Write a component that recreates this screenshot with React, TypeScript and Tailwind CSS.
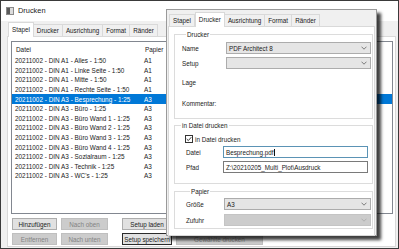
import React from 'react'

const rows: [string, string][] = [
  ['20211002 - DIN A1 - Alles - 1:50', 'A1'],
  ['20211002 - DIN A1 - Linke Seite - 1:50', 'A1'],
  ['20211002 - DIN A1 - Mitte - 1:50', 'A1'],
  ['20211002 - DIN A1 - Rechte Seite - 1:50', 'A1'],
  ['20211002 - DIN A3 - Besprechung - 1:25', 'A3'],
  ['20211002 - DIN A3 - Büro - 1:25', 'A3'],
  ['20211002 - DIN A3 - Büro Wand 1 - 1:25', 'A3'],
  ['20211002 - DIN A3 - Büro Wand 2 - 1:25', 'A3'],
  ['20211002 - DIN A3 - Büro Wand 3 - 1:25', 'A3'],
  ['20211002 - DIN A3 - Büro Wand 4 - 1:25', 'A3'],
  ['20211002 - DIN A3 - Sozialraum - 1:25', 'A3'],
  ['20211002 - DIN A3 - Technik - 1:25', 'A3'],
  ["20211002 - DIN A3 - WC's - 1:25", 'A3'],
]

const tabs = ['Stapel', 'Drucker', 'Ausrichtung', 'Format', 'Ränder']

function Tabs({ active }: { active: string }) {
  return (
    <div className="flex items-end h-[15px]">
      {tabs.map((t) =>
        t === active ? (
          <div
            key={t}
            className="h-[15px] px-[3px] flex items-center bg-white border border-b-0 border-[#d9d9d9] relative z-10 -mb-px pb-px"
          >
            {t}
          </div>
        ) : (
          <div
            key={t}
            className="h-[12px] px-[3px] flex items-center bg-[#f0f0f0] border border-b-0 border-l-0 border-[#d9d9d9] first:border-l"
          >
            {t}
          </div>
        )
      )}
    </div>
  )
}

function Chevron({ light }: { light?: boolean }) {
  return (
    <svg width="6" height="4" viewBox="0 0 6 4">
      <path d="M0.5 0.7 L3 3.2 L5.5 0.7" fill="none" stroke={light ? '#a8a8a8' : '#606060'} strokeWidth="0.8" />
    </svg>
  )
}

function Combo({ value, disabled }: { value?: string; disabled?: boolean }) {
  return (
    <div
      className={`h-[12px] flex-1 flex items-center justify-between border pl-[2px] pr-[3px] ${
        disabled ? 'bg-[#cccccc] border-[#c4c4c4]' : 'bg-[#e5e5e5] border-[#acacac]'
      }`}
    >
      <span>{value}</span>
      <Chevron light={disabled} />
    </div>
  )
}

function Btn({ label, w, disabled, focus }: { label: string; w: string; disabled?: boolean; focus?: boolean }) {
  return (
    <div
      className={`h-[12px] ${w} flex items-center justify-center border ${
        disabled
          ? 'bg-[#cccccc] border-[#bfbfbf] text-[#838383]'
          : focus
            ? 'bg-[#e1e1e1] border-[#2b2b2b]'
            : 'bg-[#e1e1e1] border-[#adadad]'
      }`}
    >
      {label}
    </div>
  )
}

export default function App() {
  return (
    <div className="w-[399px] h-[249px] overflow-hidden relative bg-[#f0f0f0] border border-[#3a3a3a] text-[#1a1a1a] text-[6.3px] leading-[7px] font-['Liberation_Sans',Arial,sans-serif]">
      {/* Title bar */}
      <div className="h-[20px] bg-white flex items-center pl-[5px] gap-[4px]">
        <svg width="8" height="8" viewBox="0 0 8 8">
          <rect x="0.5" y="0.5" width="7" height="7" fill="#dcdcdc" stroke="#8a8a8a" />
          <rect x="1" y="1" width="3" height="6" fill="#5a5a5a" />
        </svg>
        <span className="text-[7.4px] leading-[8px]">Drucken</span>
      </div>

      {/* Main tabs */}
      <div className="ml-[7px]">
        <Tabs active="Stapel" />
      </div>

      {/* Tab page */}
      <div className="ml-[6px] w-[389px] h-[211px] bg-white border border-[#d9d9d9]">
        <div className="ml-[3px] mt-[4px] w-[382px] h-[173px] border border-[#828790] bg-white text-[6.4px]">
          <div className="h-[14px] flex items-center pl-[4px]">
            <div className="w-[129px]">Datei</div>
            <div>Papier</div>
          </div>
          {rows.map(([name, size], i) => (
            <div
              key={i}
              className={`h-[9.6px] flex items-center pl-[3px] ${i === 4 ? 'bg-[#0078d7] text-white' : ''}`}
            >
              <div className="w-[129px] whitespace-nowrap">{name}</div>
              <div>{size}</div>
            </div>
          ))}
        </div>

        <div className="ml-[4px] mt-[4px] flex">
          <Btn label="Hinzufügen" w="w-[45px]" />
          <div className="ml-[4px]"><Btn label="Nach oben" w="w-[47px]" disabled /></div>
          <div className="ml-[14px]"><Btn label="Setup laden" w="w-[50px]" /></div>
          <div className="ml-[4px]"><Btn label="Alle drucken" w="w-[87px]" /></div>
        </div>
        <div className="ml-[4px] mt-[3px] flex">
          <Btn label="Entfernen" w="w-[45px]" disabled />
          <div className="ml-[4px]"><Btn label="Nach unten" w="w-[47px]" disabled /></div>
          <div className="ml-[14px]"><Btn label="Setup speichern" w="w-[50px]" focus /></div>
          <div className="ml-[4px]"><Btn label="Gewählte drucken" w="w-[87px]" disabled /></div>
        </div>
      </div>

      {/* Floating properties window */}
      <div className="absolute left-[165px] top-[8px] w-[211px] h-[227px] bg-[#f0f0f0] border border-[#9a9a9a] shadow-[4px_4px_3px_rgba(0,0,0,0.75)]">
        <div className="ml-[2px] mt-px">
          <Tabs active="Drucker" />
        </div>
        <div className="ml-px w-[207px] h-[210px] bg-white border border-[#d9d9d9]">
          {/* Drucker group */}
          <fieldset className="ml-[5px] mt-[4px] w-[199px] border border-[#dcdcdc] pl-[7px] pr-px pb-[9px]">
            <legend className="ml-[4px] px-[1px]">Drucker</legend>
            <div className="mt-[4px] h-[12px] flex items-center">
              <div className="w-[44px]">Name</div>
              <Combo value="PDF Architect 8" />
            </div>
            <div className="mt-[3px] h-[12px] flex items-center">
              <div className="w-[44px]">Setup</div>
              <Combo />
            </div>
            <div className="mt-[7px] h-[12px] flex items-center">Lage</div>
            <div className="mt-[9px] h-[12px] flex items-center">Kommentar:</div>
          </fieldset>

          {/* In Datei drucken group */}
          <fieldset className="ml-[5px] mt-[3px] w-[199px] border border-[#dcdcdc] pl-[10px] pr-[4px] pb-[10px]">
            <legend className="-ml-[4px] px-[1px]">in Datei drucken</legend>
            <div className="mt-[5px] h-[10px] flex items-center gap-[2px]">
              <svg width="8" height="8" viewBox="0 0 8 8">
                <rect x="0.5" y="0.5" width="7" height="7" fill="white" stroke="#333" />
                <path d="M1.7 4 L3.3 5.6 L6.3 2.2" fill="none" stroke="#222" strokeWidth="0.9" />
              </svg>
              <span>in Datei drucken</span>
            </div>
            <div className="mt-[2px] h-[12px] flex items-center pl-px">
              <div className="w-[37px]">Datei</div>
              <div className="flex-1 h-[12px] flex items-center bg-white border border-[#5b93b5] pl-[2px]">
                Besprechung.pdf
                <span className="inline-block w-px h-[7px] bg-[#111]" />
              </div>
            </div>
            <div className="mt-[3px] h-[12px] flex items-center pl-px">
              <div className="w-[37px]">Pfad</div>
              <div className="flex-1 h-[12px] flex items-center bg-white border border-[#7a7a7a] pl-[2px]">
                Z:\20210205_Multi_Plot\Ausdruck
              </div>
            </div>
          </fieldset>

          {/* Papier group */}
          <fieldset className="ml-[5px] mt-[4px] w-[199px] border border-[#dcdcdc] pl-[11px] pr-px pb-[2px]">
            <legend className="ml-[4px] px-[1px]">Papier</legend>
            <div className="mt-[3px] h-[12px] flex items-center">
              <div className="w-[38px]">Größe</div>
              <Combo value="A3" />
            </div>
            <div className="mt-[4px] h-[12px] flex items-center">
              <div className="w-[38px]">Zufuhr</div>
              <Combo disabled />
            </div>
          </fieldset>
        </div>
      </div>
    </div>
  )
}
